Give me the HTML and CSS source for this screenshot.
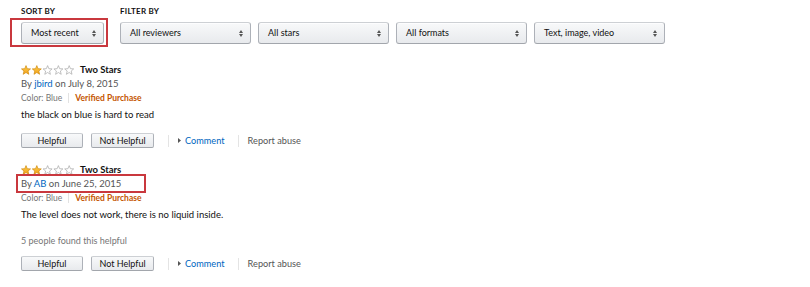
FILE: index.html
```html
<!DOCTYPE html>
<html>
  <head>
    <meta charset="UTF-8">
    <title>Customer reviews</title>
    <link rel="stylesheet" href="styles.css">
  </head>
  <body>
    <svg class="defs" width="0" height="0">
      <defs>
        <polygon id="star" points="5,0.6 6.25,3.7 9.5,3.9 7,6 7.8,9.3 5,7.5 2.2,9.3 3,6 0.5,3.9 3.75,3.7"/>
        <linearGradient id="gold" x1="0" y1="0" x2="0" y2="1">
          <stop offset="0" stop-color="#ffce4a"/>
          <stop offset="1" stop-color="#f2a11b"/>
        </linearGradient>
      </defs>
    </svg>

    <div class="filters">
      <div class="group">
        <div class="label">SORT BY</div>
        <div class="select sort marked"><span>Most recent</span><svg class="updown" width="4" height="7" viewBox="0 0 4 7"><path d="M0 3 2 0 4 3zM0 4h4L2 7z"/></svg></div>
      </div>
      <div class="group">
        <div class="label">FILTER BY</div>
        <div class="selects">
          <div class="select"><span>All reviewers</span><svg class="updown" width="4" height="7" viewBox="0 0 4 7"><path d="M0 3 2 0 4 3zM0 4h4L2 7z"/></svg></div>
          <div class="select"><span>All stars</span><svg class="updown" width="4" height="7" viewBox="0 0 4 7"><path d="M0 3 2 0 4 3zM0 4h4L2 7z"/></svg></div>
          <div class="select"><span>All formats</span><svg class="updown" width="4" height="7" viewBox="0 0 4 7"><path d="M0 3 2 0 4 3zM0 4h4L2 7z"/></svg></div>
          <div class="select"><span>Text, image, video</span><svg class="updown" width="4" height="7" viewBox="0 0 4 7"><path d="M0 3 2 0 4 3zM0 4h4L2 7z"/></svg></div>
        </div>
      </div>
    </div>

    <div class="review">
      <div class="title">
        <svg class="stars" width="54" height="10" viewBox="0 0 54 10">
          <use href="#star" class="full"/>
          <use href="#star" x="10.8" class="full"/>
          <use href="#star" x="21.6" class="empty"/>
          <use href="#star" x="32.4" class="empty"/>
          <use href="#star" x="43.2" class="empty"/>
        </svg>
        <b>Two Stars</b>
      </div>
      <div class="byline">By <a href="#">jbird</a> on July 8, 2015</div>
      <div class="meta">Color: Blue<span class="bar"></span><span class="verified">Verified Purchase</span></div>
      <p class="body">the black on blue is hard to read</p>
      <div class="actions">
        <button class="btn">Helpful</button>
        <button class="btn wide">Not Helpful</button>
        <span class="sep"></span>
        <a class="comment" href="#"><svg width="3" height="5" viewBox="0 0 3 5"><path d="M0 0 3 2.5 0 5z"/></svg>Comment</a>
        <span class="sep"></span>
        <a class="abuse" href="#">Report abuse</a>
      </div>
    </div>

    <div class="review">
      <div class="title">
        <svg class="stars" width="54" height="10" viewBox="0 0 54 10">
          <use href="#star" class="full"/>
          <use href="#star" x="10.8" class="full"/>
          <use href="#star" x="21.6" class="empty"/>
          <use href="#star" x="32.4" class="empty"/>
          <use href="#star" x="43.2" class="empty"/>
        </svg>
        <b>Two Stars</b>
      </div>
      <div class="byline marked">By <a href="#">AB</a> on June 25, 2015</div>
      <div class="meta">Color: Blue<span class="bar"></span><span class="verified">Verified Purchase</span></div>
      <p class="body">The level does not work, there is no liquid inside.</p>
      <p class="votes">5 people found this helpful</p>
      <div class="actions">
        <button class="btn">Helpful</button>
        <button class="btn wide">Not Helpful</button>
        <span class="sep"></span>
        <a class="comment" href="#"><svg width="3" height="5" viewBox="0 0 3 5"><path d="M0 0 3 2.5 0 5z"/></svg>Comment</a>
        <span class="sep"></span>
        <a class="abuse" href="#">Report abuse</a>
      </div>
    </div>
  </body>
</html>
```

FILE: styles.css
```css
html { margin: 0; padding: 0; background-color: #fff; }
body { margin: 0; padding: 4px 21px; font-family: Lato, "Open Sans", sans-serif; font-size: 9.5px;
       line-height: 14px; color: #111; }
a { text-decoration: none; color: #0066c0; }
p { margin: 0; }

.defs { position: absolute; }

.filters { display: flex; gap: 16px; }
.label { font-size: 8px; font-weight: bold; letter-spacing: .03em; margin-bottom: 4px; }
.selects { display: flex; gap: 7px; }

.select { box-sizing: border-box; width: 131px; height: 22px; display: flex; align-items: center;
          justify-content: space-between; padding: 0 7px 0 9px; border: 1px solid #adb1b8;
          border-color: #cdd0d4 #adb1b8 #a2a6ac; border-radius: 3px; font-size: 9px;
          background: linear-gradient(#f8f9fa, #e8eaed); box-shadow: inset 0 1px 0 rgba(255,255,255,.7); }
.select.sort { width: 83px; }
.updown { fill: #555; }

.marked { position: relative; }
.select.marked::after { content: ""; position: absolute; left: -12px; right: -5px; top: -5px; bottom: -4px;
                        border: 2px solid #c9383e; }
.byline.marked::after { content: ""; position: absolute; left: -5px; width: 126px; top: -3px; bottom: -2px;
                        border: 2px solid #c9383e; }

.review { margin-top: 19px; }
.review + .review { margin-top: 15px; }

.title { display: flex; align-items: center; gap: 5px; height: 14px; }
.title b { font-size: 9.5px; }
.stars .full { fill: url(#gold); stroke: #d08a0b; stroke-width: .7; }
.stars .empty { fill: #fff; stroke: #a8a8a8; stroke-width: .7; }

.byline { color: #555; }
.meta { display: flex; align-items: center; color: #767676; font-size: 8.5px; }
.bar { width: 1px; height: 10px; background: #e2e2e2; margin: 0 6px 0 6px; }
.verified { color: #c45500; font-weight: bold; }

.body { margin-top: 3px; }
.votes { margin-top: 12px; color: #767676; font-size: 9px; }

.actions { display: flex; align-items: center; margin-top: 11px; font-size: 9.2px; }
.votes + .actions { margin-top: 8px; }
.btn { box-sizing: border-box; width: 62px; height: 15px; padding: 0; font: inherit; font-size: 9px;
       line-height: 13px; color: #111; border: 1px solid #adb1b8; border-color: #cdd0d4 #adb1b8 #a2a6ac;
       border-radius: 2px; background: linear-gradient(#f8f9fa, #e8eaed); }
.btn.wide { width: 63px; margin-left: 8px; }
.sep { width: 1px; height: 12px; background: #e4e4e4; margin: 0 9px 0 14px; }
.comment { display: flex; align-items: center; gap: 4px; }
.comment svg { fill: #555; }
.comment + .sep { margin-left: 13px; }
.abuse { color: #555; }
```
